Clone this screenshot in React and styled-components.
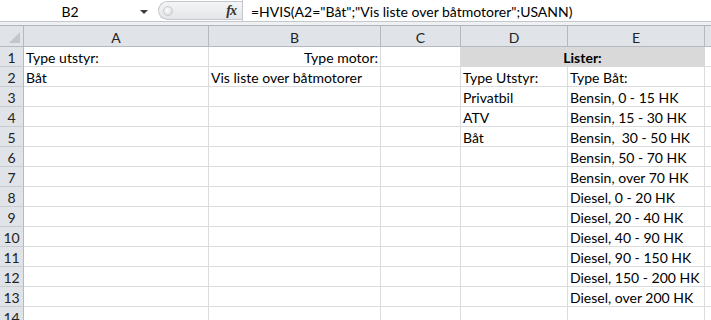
import React from 'react';
import styled, { createGlobalStyle } from 'styled-components';

const Global = createGlobalStyle`
  html, body { margin: 0; padding: 0; background: #fff; }
  body { font-family: Lato, "Open Sans", sans-serif; color: #000; overflow: hidden; }
  * { box-sizing: border-box; }
`;

const Page = styled.div`
  width: 711px;
  height: 320px;
  overflow: hidden;
  display: flex;
  flex-direction: column;
`;

const FormulaBar = styled.div`
  height: 22px;
  flex: none;
  display: flex;
  align-items: stretch;
  border-bottom: 1px solid #c4c8ce;
  background: #fff;
`;

const NameBox = styled.div`
  width: 158px;
  display: flex;
  align-items: center;
`;

const NameText = styled.div`
  flex: 1;
  text-align: center;
  font-size: 14px;
  padding-top: 2px;
`;

const DropArrow = styled.div`
  width: 0;
  height: 0;
  border-left: 4px solid transparent;
  border-right: 4px solid transparent;
  border-top: 4px solid #3c3c3c;
  margin: 2px 10px 0 0;
`;

const Pill = styled.div`
  width: 84px;
  margin: 1px 0;
  border: 1px solid #c4c8ce;
  border-right: none;
  border-radius: 11px 0 0 11px;
  background: linear-gradient(#f4f5f6, #e3e5e8);
  display: flex;
  align-items: center;
  justify-content: space-between;
  padding: 0 6px 0 4px;
`;

const Knob = styled.div`
  width: 10px;
  height: 10px;
  border-radius: 50%;
  background: radial-gradient(circle at 40% 40%, #ffffff, #d0d3d7);
  border: 1px solid #c9ccd0;
`;

const Fx = styled.span`
  font-family: "Liberation Serif", serif;
  font-style: italic;
  font-size: 14px;
  font-weight: bold;
  color: #333;
  letter-spacing: -1px;
`;

const FormulaText = styled.div`
  flex: 1;
  border-left: 1px solid #c4c8ce;
  display: flex;
  align-items: center;
  padding: 2px 0 0 8px;
  font-size: 14px;
  white-space: pre;
`;

const Gap = styled.div`
  height: 4px;
  flex: none;
  background: #eef0f2;
  border-bottom: 1px solid #b0b5bb;
`;

const Sheet = styled.div`
  display: grid;
  width: 780px;
  grid-template-columns: 24px 185px 172px 80px 107px 137px 75px;
  grid-template-rows: 21px;
  grid-auto-rows: 20px;
`;

const ColHead = styled.div`
  background: #e0e3e8;
  border-right: 1px solid #b6bac0;
  border-bottom: 1px solid #b6bac0;
  font-size: 14px;
  display: flex;
  align-items: center;
  justify-content: center;
  padding-top: 3px;
  color: #222;
  position: relative;
`;

const Corner = styled(ColHead)`
  &::after {
    content: '';
    position: absolute;
    right: 3px;
    bottom: 3px;
    width: 0;
    height: 0;
    border-left: 11px solid transparent;
    border-bottom: 11px solid #c3c7cc;
  }
`;

const RowHead = styled.div`
  background: #e0e3e8;
  border-right: 1px solid #b6bac0;
  border-bottom: 1px solid #c9cdd2;
  font-size: 14px;
  line-height: 18px;
  text-align: center;
  padding-top: 2px;
  color: #222;
`;

const Cell = styled.div`
  grid-column: ${(p) => (p.$span ? `span ${p.$span}` : 'auto')};
  background: ${(p) => p.$fill || '#fff'};
  border-right: 1px solid ${(p) => p.$fill || '#dadcdd'};
  border-bottom: 1px solid ${(p) => p.$fill || '#dadcdd'};
  font-size: 14px;
  line-height: 18px;
  font-weight: ${(p) => (p.$bold ? 700 : 400)};
  text-align: ${(p) => p.$align || 'left'};
  padding: 2px 2px 0 2px;
  white-space: pre;
  overflow: hidden;
`;

const cols = ['A', 'B', 'C', 'D', 'E', 'F'];

const eList = [
  'Bensin, 0 - 15 HK',
  'Bensin, 15 - 30 HK',
  'Bensin,  30 - 50 HK',
  'Bensin, 50 - 70 HK',
  'Bensin, over 70 HK',
  'Diesel, 0 - 20 HK',
  'Diesel, 20 - 40 HK',
  'Diesel, 40 - 90 HK',
  'Diesel, 90 - 150 HK',
  'Diesel, 150 - 200 HK',
  'Diesel, over 200 HK',
];
const dList = ['Privatbil', 'ATV', 'Båt'];

function rowCells(r) {
  if (r === 1) {
    return [
      <Cell key="a">Type utstyr:</Cell>,
      <Cell key="b" $align="right">Type motor:</Cell>,
      <Cell key="c" />,
      <Cell key="de" $span={2} $fill="#d9d9d9" $bold $align="center">Lister:</Cell>,
      <Cell key="f" />,
    ];
  }
  if (r === 2) {
    return [
      <Cell key="a">Båt</Cell>,
      <Cell key="b">Vis liste over båtmotorer</Cell>,
      <Cell key="c" />,
      <Cell key="d">Type Utstyr:</Cell>,
      <Cell key="e">Type Båt:</Cell>,
      <Cell key="f" />,
    ];
  }
  return [
    <Cell key="a" />,
    <Cell key="b" />,
    <Cell key="c" />,
    <Cell key="d">{dList[r - 3] || ''}</Cell>,
    <Cell key="e">{eList[r - 3] || ''}</Cell>,
    <Cell key="f" />,
  ];
}

export default function App() {
  const rows = Array.from({ length: 14 }, (_, i) => i + 1);
  return (
    <Page>
      <Global />
      <FormulaBar>
        <NameBox>
          <NameText>B2</NameText>
          <DropArrow />
        </NameBox>
        <Pill>
          <Knob />
          <Fx>fx</Fx>
        </Pill>
        <FormulaText>=HVIS(A2="Båt";"Vis liste over båtmotorer";USANN)</FormulaText>
      </FormulaBar>
      <Gap />
      <Sheet>
        <Corner />
        {cols.map((c) => (
          <ColHead key={c}>{c}</ColHead>
        ))}
        {rows.map((r) => (
          <React.Fragment key={r}>
            <RowHead>{r}</RowHead>
            {rowCells(r)}
          </React.Fragment>
        ))}
      </Sheet>
    </Page>
  );
}
